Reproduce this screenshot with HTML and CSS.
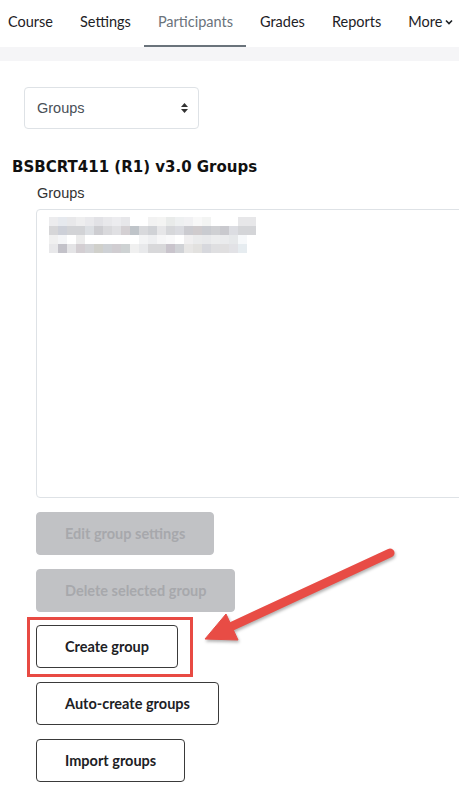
FILE: index.html
```html
<!DOCTYPE html>
<html>
<head>
<meta charset="utf-8">
<link rel="stylesheet" href="styles.css">
</head>
<body>
<nav class="tabs">
  <a class="tab">Course</a>
  <a class="tab">Settings</a>
  <a class="tab active">Participants</a>
  <a class="tab">Grades</a>
  <a class="tab">Reports</a>
  <a class="tab">More <svg class="chev" width="8" height="6" viewBox="0 0 8 6"><path d="M1 1.5 L4 4.5 L7 1.5" fill="none" stroke="#1d2125" stroke-width="1.6"/></svg></a>
</nav>
<div class="band"></div>
<main class="page">
  <div class="select">
    <span>Groups</span>
    <svg class="updown" width="7" height="10" viewBox="0 0 7 10"><path d="M3.5 0 L7 4 H0 Z M0 6 H7 L3.5 10 Z" fill="#333"/></svg>
  </div>
  <h2 class="title">BSBCRT411 (R1) v3.0 Groups</h2>
  <div class="group-area">
    <div class="label">Groups</div>
    <div class="listbox">
      <div class="mosaic">
        <div class="mrow r1"></div>
        <div class="mrow r2"></div>
        <div class="mrow r3"></div>
        <div class="mrow r4"></div>
      </div>
    </div>
    <div class="buttons">
      <div class="btn disabled">Edit group settings</div>
      <div class="btn disabled">Delete selected group</div>
      <div class="highlight"><div class="btn">Create group</div></div>
      <div class="btn">Auto-create groups</div>
      <div class="btn">Import groups</div>
    </div>
  </div>
  <svg class="arrow" width="459" height="790" viewBox="0 0 459 790">
    <g fill="#e84c45" stroke="#e84c45" class="arrowshape">
      <line x1="390" y1="553" x2="226" y2="629" stroke-width="9" stroke-linecap="round"/>
      <polygon points="205,639 226,614 238,640" stroke-width="1" stroke-linejoin="round"/>
    </g>
  </svg>
</main>
</body>
</html>
```

FILE: styles.css
```css
* { box-sizing: border-box; }
body {
  margin: 0;
  background: #fff;
  font-family: "Lato", "Inter", sans-serif;
  color: #1d2125;
  width: 459px;
  height: 790px;
  overflow: hidden;
  position: relative;
}
.tabs {
  display: flex;
  height: 47px;
  margin-left: -5.5px;
  white-space: nowrap;
}
.tab {
  display: flex;
  align-items: center;
  padding: 0 13.5px 3px;
  font-size: 14.5px;
  color: #1d2125;
  border-bottom: 2px solid transparent;
}
.tab.active {
  color: #6a737b;
  border-bottom-color: #6a737b;
}
.chev { margin-left: 3px; margin-top: 2px; }
.band {
  height: 14px;
  background: #f5f5f7;
}
.page {
  padding: 26px 0 0 0;
}
.select {
  margin-left: 24px;
  width: 175px;
  height: 42px;
  border: 1px solid #dee2e6;
  border-radius: 4px;
  display: flex;
  align-items: center;
  justify-content: space-between;
  padding: 0 10px 0 12px;
  font-family: "Liberation Sans", Arial, sans-serif;
  font-size: 14.5px;
  color: #495057;
}
.title {
  margin: 28px 0 0 12px;
  font-family: "DejaVu Sans", Verdana, sans-serif;
  font-weight: bold;
  font-size: 15px;
  color: #111;
  line-height: 20px;
}
.group-area {
  padding-left: 36px;
}
.label {
  margin-top: 7px;
  padding-left: 1px;
  font-family: "Liberation Sans", Arial, sans-serif;
  font-size: 14.5px;
  color: #333;
  line-height: 18px;
}
.listbox {
  margin-top: 7px;
  width: 440px;
  height: 289px;
  border: 1px solid #dee2e6;
  border-radius: 4px;
  padding: 7px 0 0 12px;
}
.mrow { height: 9px; }
.mrow.r1 {
  width: 207px;
  background: linear-gradient(90deg,
    #ececee 0 9px, #e6e9ee 9px 18px, #e8e8ea 18px 27px, #eeeeef 27px 36px, #e9e9ec 36px 45px, #e2e2e6 45px 54px,
    #e8e8eb 54px 63px, #ececef 63px 72px, #e7e7ea 72px 81px, #fff 81px 99px, #f2f2f2 99px 108px, #f4f4f3 108px 117px,
    #e9ebea 117px 126px, #eef0f1 126px 135px, #f1f1f3 135px 144px, #f8f8f8 144px 153px, #f3f4f3 153px 162px,
    #fff 162px 189px, #e7e7e9 189px 207px);
}
.mrow.r2 {
  width: 207px;
  background: linear-gradient(90deg,
    #d6d6d8 0 9px, #cdd0d8 9px 18px, #d2d3d6 18px 36px, #dcdfe3 36px 45px, #cdcdd1 45px 54px, #d9d9dc 54px 63px,
    #e0e0e3 63px 72px, #d4d0d3 72px 81px, #bfc4c9 81px 90px, #d8d9dc 90px 99px, #d0d2d6 99px 108px, #e6e6e8 108px 117px,
    #d6d7da 117px 126px, #dadbe0 126px 135px, #cbcbd0 135px 144px, #cfcbcd 144px 153px, #c9cbd0 153px 162px,
    #cfd0d3 162px 171px, #c9c9ce 171px 180px, #dcdde2 180px 189px, #d4d5d8 189px 207px);
}
.mrow.r3 {
  width: 198px;
  background: linear-gradient(90deg,
    #f0f0f0 0 9px, #f4f5f7 9px 18px, #fff 18px 27px, #ececec 27px 36px, #fff 36px 90px, #f3f4f5 90px 99px,
    #eeeff1 99px 108px, #f6f6f7 108px 117px, #f9f9fa 117px 126px, #fff 126px 135px, #f0eff0 135px 144px,
    #eaebec 144px 153px, #e8e9eb 153px 162px, #ecedee 162px 171px, #eaebed 171px 180px, #e6e8ea 180px 189px, #f6f8fa 189px 198px);
}
.mrow.r4 {
  width: 198px;
  background: linear-gradient(90deg,
    #e8e8ea 0 9px, #c3c2c9 9px 18px, #e4e4e6 18px 27px, #d3ced2 27px 36px, #d4d5d8 36px 45px, #d0d0cb 45px 54px,
    #ced1d5 54px 63px, #d0cdd1 63px 72px, #ced2d3 72px 81px, #f0f0f0 81px 90px, #e8e9eb 90px 99px, #d8d8da 99px 117px,
    #c9c4cc 117px 126px, #d0d2d6 126px 135px, #e7e6e5 135px 144px, #e2e1df 144px 153px, #d7d8dd 153px 162px,
    #dfdfe1 162px 171px, #e0dfe0 171px 180px, #e2e2e6 180px 189px, #e6ecf0 189px 198px);
}
.buttons {
  margin-top: 14px;
  display: flex;
  flex-direction: column;
  align-items: flex-start;
  gap: 14px;
}
.btn {
  height: 43px;
  display: flex;
  align-items: center;
  padding: 0 28px;
  border: 1px solid #3a3a3a;
  border-radius: 4px;
  font-size: 14.5px;
  font-weight: bold;
  color: #1d2125;
  background: #fff;
  white-space: nowrap;
}
.btn.disabled {
  background: #c1c2c5;
  border-color: #c1c2c5;
  color: #a7a8ac;
}
.highlight {
  margin: -9px 0 -9px -9px;
  padding: 5px 12px 6px 6px;
  border: 3px solid #e84a43;
}
.arrow {
  position: absolute;
  left: 0;
  top: 0;
  pointer-events: none;
}
.arrowshape {
  filter: drop-shadow(1px 2px 1.5px rgba(0,0,0,0.3));
}
```
